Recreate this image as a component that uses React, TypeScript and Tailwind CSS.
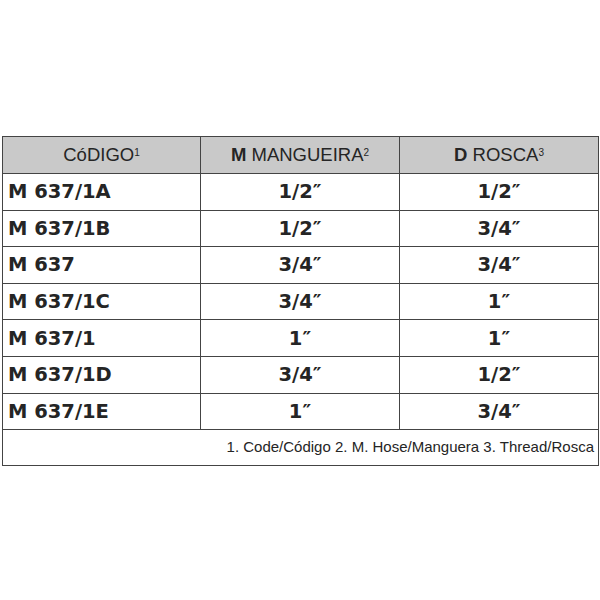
const ROWS: [string, string, string][] = [
  ['M 637/1A', '1/2\u2033', '1/2\u2033'],
  ['M 637/1B', '1/2\u2033', '3/4\u2033'],
  ['M 637', '3/4\u2033', '3/4\u2033'],
  ['M 637/1C', '3/4\u2033', '1\u2033'],
  ['M 637/1', '1\u2033', '1\u2033'],
  ['M 637/1D', '3/4\u2033', '1/2\u2033'],
  ['M 637/1E', '1\u2033', '3/4\u2033'],
]

export default function App() {
  return (
    <div className="h-[600px] w-[600px] bg-white pt-[136px] pl-[2px] text-[#252525] [font-family:'DejaVu_Sans',sans-serif]">
      <table className="w-[596px] table-fixed border-collapse">
        <colgroup>
          <col className="w-[198px]" />
          <col className="w-[199px]" />
          <col className="w-[199px]" />
        </colgroup>
        <thead>
          <tr className="h-[37px] bg-[#c9c9c9] text-[18.5px] [font-family:'Liberation_Sans',sans-serif]">
            <th className="border-[1.5px] border-[#444] font-normal">
              CóDIGO<sup className="text-[10px]">1</sup>
            </th>
            <th className="border-[1.5px] border-[#444] font-normal">
              <span className="font-bold">M</span> MANGUEIRA<sup className="text-[10px]">2</sup>
            </th>
            <th className="border-[1.5px] border-[#444] font-normal">
              <span className="font-bold">D</span> ROSCA<sup className="text-[10px]">3</sup>
            </th>
          </tr>
        </thead>
        <tbody>
          {ROWS.map((r) => (
            <tr key={r[0]} className="h-[36.6px] text-[19.5px] font-bold">
              <td className="border-[1.5px] border-[#444] pl-[5px]">{r[0]}</td>
              <td className="border-[1.5px] border-[#444] text-center">{r[1]}</td>
              <td className="border-[1.5px] border-[#444] text-center">{r[2]}</td>
            </tr>
          ))}
          <tr className="h-[36px]">
            <td
              colSpan={3}
              className="border-[1.5px] border-[#444] pr-[4px] text-right text-[15px] [font-family:'Liberation_Sans',sans-serif]"
            >
              1. Code/Código 2. M. Hose/Manguera 3. Thread/Rosca
            </td>
          </tr>
        </tbody>
      </table>
    </div>
  )
}
